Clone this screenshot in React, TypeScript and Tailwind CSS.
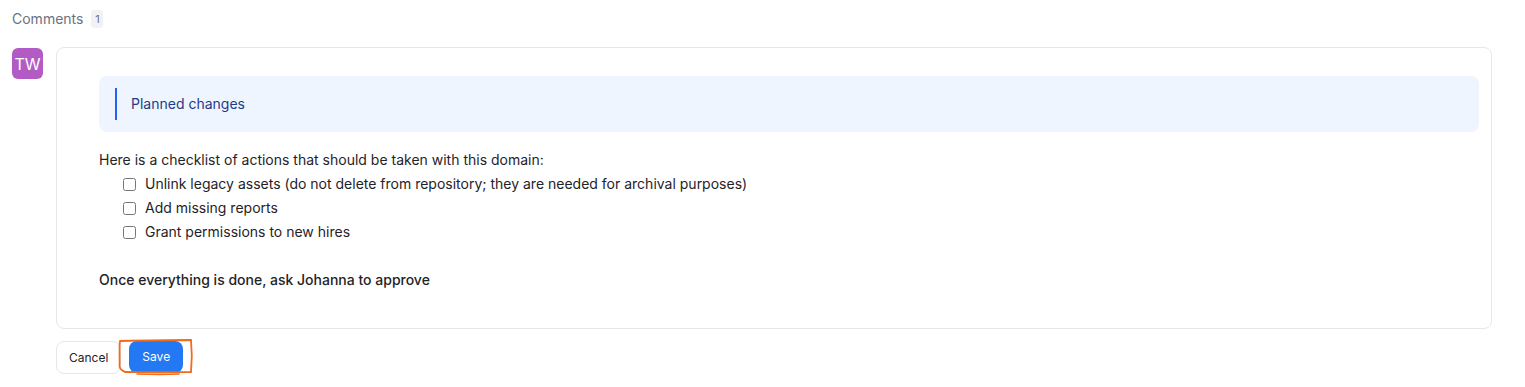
import { useState } from 'react';

const items = [
  'Unlink legacy assets (do not delete from repository; they are needed for archival purposes)',
  'Add missing reports',
  'Grant permissions to new hires',
];

export default function App() {
  const [checked, setChecked] = useState<boolean[]>([false, false, false]);

  const toggle = (i: number) => {
    setChecked((prev) => prev.map((v, idx) => (idx === i ? !v : v)));
  };

  return (
    <div className="w-[1525px] h-[387px] bg-white pl-3 pr-[33px] pt-[10px] font-['Inter',sans-serif] text-[#1f2328]">
      <div className="flex items-center h-[18px] gap-2">
        <span className="text-sm text-[#6b7280] leading-[18px]">Comments</span>
        <span className="flex items-center justify-center w-3 h-[18px] rounded-[3px] bg-[#f1f2f4] text-[11px] text-[#6b7280]">
          1
        </span>
      </div>

      <div className="flex gap-[13px] mt-[19px]">
        <div className="flex items-center justify-center w-[31px] h-[31px] mt-px rounded-[6px] bg-[#b35bc5] text-white text-[16px] leading-none shrink-0">
          TW
        </div>

        <div className="flex-1 border border-[#e5e7eb] rounded-lg pl-[42px] pr-3 pt-7 pb-9 text-sm">
          <div className="bg-[#eef5fe] rounded-lg px-4 py-3">
            <div className="border-l-2 border-[#2563eb] pl-[14px] h-8 flex items-center text-[#1e3a8a]">
              Planned changes
            </div>
          </div>

          <p className="mt-4 leading-6">Here is a checklist of actions that should be taken with this domain:</p>
          <ul className="pl-6">
            {items.map((item, i) => (
              <li key={item} className="flex items-center leading-6">
                <input
                  type="checkbox"
                  checked={checked[i]}
                  onChange={() => toggle(i)}
                  className="m-0 mr-[9px] w-[13px] h-[13px]"
                />
                <span>{item}</span>
              </li>
            ))}
          </ul>
          <p className="leading-6 h-6"></p>
          <p className="leading-6 font-medium">Once everything is done, ask Johanna to approve</p>
        </div>
      </div>

      <div className="flex gap-2 ml-[44px] mt-[12px]">
        <button className="h-[33px] px-3 border border-[#e5e7eb] rounded-lg text-xs text-[#1f2328] bg-white">
          Cancel
        </button>
        <div className="relative">
          <button className="h-[32px] px-[13px] rounded-lg bg-[#2279f3] text-xs text-white">Save</button>
          <svg
            className="absolute -left-[12px] -top-[3px] pointer-events-none"
            width="78"
            height="38"
            viewBox="0 0 78 38"
            fill="none"
          >
            <path
              d="M3 3 C25 2.5 55 2 74 2 C75 12 75 24 74 34 C55 34.5 30 34 8 34 C4 32 3 31 2.5 28 C3 20 2 10 3 3"
              stroke="#f26a1b"
              strokeWidth="1.8"
              strokeLinecap="round"
            />
            <path d="M20 36 C35 36.5 50 36.5 62 36" stroke="#f26a1b" strokeWidth="1.6" strokeLinecap="round" />
          </svg>
        </div>
      </div>
    </div>
  );
}
